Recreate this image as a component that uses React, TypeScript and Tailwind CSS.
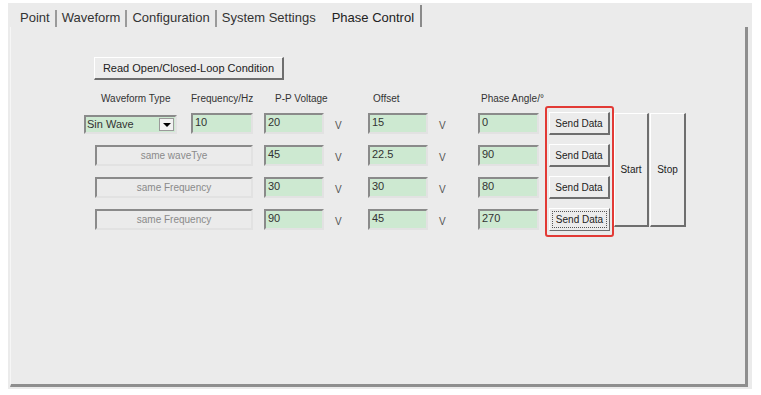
import React from 'react';

const font = { fontFamily: '"Liberation Sans", Arial, sans-serif' };

const raised =
  'border border-t-white border-l-white border-r-[#6e6e6e] border-b-[#6e6e6e] bg-[#ececec]';
const sunken =
  'border-2 border-t-[#8a8a8a] border-l-[#8a8a8a] border-r-[#e2e2e2] border-b-[#e2e2e2]';

const tabs = ['Point', 'Waveform', 'Configuration', 'System Settings'];

const rows = [
  { first: 'select', pp: '20', offset: '15', phase: '0' },
  { first: 'same waveTye', pp: '45', offset: '22.5', phase: '90' },
  { first: 'same Frequency', pp: '30', offset: '30', phase: '80' },
  { first: 'same Frequency', pp: '90', offset: '45', phase: '270' },
];

function Field({ value, w }: { value: string; w: string }) {
  return (
    <div className={`${sunken} ${w} h-[21px] bg-[#cde9d1] text-[11px] text-[#333] pl-[2px] leading-[15px]`}>
      {value}
    </div>
  );
}

function Unit({ w }: { w: string }) {
  return <div className={`${w} pl-[11px] pt-[5px] text-[10px] text-[#555]`}>V</div>;
}

export default function App() {
  return (
    <div className="w-[761px] h-[395px] bg-white pt-[3px] pl-[8px]" style={font}>
      <div className="w-[744px] h-[386px] bg-[#ebebeb] flex flex-col">
        {/* tab strip */}
        <div className="h-[24px] flex items-center pt-[6px] pl-[12px] text-[13px] text-[#333]">
          {tabs.map((t, i) => (
            <React.Fragment key={t}>
              <span className={i === 3 ? 'pr-[16px]' : ''}>{t}</span>
              {i < 3 && <span className="mx-[5px] w-[2px] h-[17px] bg-[#9a9a9a]" />}
            </React.Fragment>
          ))}
          <span className="text-[#222]">Phase Control</span>
          <span className="ml-[6px] w-[2px] h-[22px] self-end bg-[#8a8a8a]" />
        </div>

        {/* panel */}
        <div className="ml-[2px] w-[738px] h-[360px] border-l border-l-[#f6f6f6] border-r-[3px] border-r-[#8e8e8e] border-b-[3px] border-b-[#8e8e8e] flex flex-col">
          <button
            className={`${raised} ml-[83px] mt-[30px] w-[190px] h-[23px] text-[11px] text-[#222] border-r-2 border-b-2`}
          >
            Read Open/Closed-Loop Condition
          </button>

          <div className="flex mt-[11px] h-[14px] text-[10px] text-[#333]">
            <span className="ml-[90px] w-[90px]">Waveform Type</span>
            <span className="w-[84px]">Frequency/Hz</span>
            <span className="w-[98px]">P-P Voltage</span>
            <span className="w-[108px]">Offset</span>
            <span>Phase Angle/°</span>
          </div>

          <div className="flex items-start mt-[1px]">
            <div className="ml-[73px] pt-[7px] flex flex-col gap-[11px]">
              {rows.map((r, i) => (
                <div key={i} className="flex h-[21px]">
                  {r.first === 'select' ? (
                    <>
                      <div className={`${sunken} w-[93px] h-[19px] mt-[2px] bg-[#cde9d1] flex items-center justify-between text-[11px] text-[#333] pl-[1px] pr-[1px]`}>
                        <span>Sin Wave</span>
                        <span className="w-[15px] h-[13px] bg-[#f2f2f2] border border-[#9a9a9a] flex items-center justify-center">
                          <span className="w-0 h-0 border-l-[4px] border-r-[4px] border-t-[4px] border-l-transparent border-r-transparent border-t-black" />
                        </span>
                      </div>
                      <div className="ml-[14px]">
                        <Field value="10" w="w-[62px]" />
                      </div>
                    </>
                  ) : (
                    <div className={`${sunken} ml-[11px] w-[158px] h-[21px] text-[10px] text-[#8a8a8a] flex items-center justify-center`}>
                      {r.first}
                    </div>
                  )}
                  <div className="ml-[11px] flex">
                    <Field value={r.pp} w="w-[60px]" />
                    <Unit w="w-[44px]" />
                    <Field value={r.offset} w="w-[60px]" />
                    <Unit w="w-[50px]" />
                    <Field value={r.phase} w="w-[61px]" />
                  </div>
                </div>
              ))}
            </div>

            <div className="ml-[6px] w-[69px] h-[131px] border-2 border-[#e23a35] rounded-[3px] flex flex-col items-center pt-[4px] gap-[9px]">
              {[0, 1, 2, 3].map((i) => (
                <button
                  key={i}
                  className={`${raised} w-[61px] h-[23px] text-[10px] text-[#222] ${
                    i === 3 ? 'border-[#444] border-t-[#444] border-l-[#444] outline-1 outline-dotted outline-offset-[-4px] outline-[#555]' : 'border-b-2 border-r-2'
                  }`}
                >
                  Send Data
                </button>
              ))}
            </div>

            <button className={`${raised} mt-[7px] w-[35px] h-[114px] text-[10px] text-[#222] border-r-2 border-b-2 border-t-[#ececec]`}>
              Start
            </button>
            <button className={`${raised} ml-[1px] mt-[7px] w-[36px] h-[114px] text-[10px] text-[#222] border-r-2 border-b-2 border-t-[#ececec]`}>
              Stop
            </button>
          </div>
        </div>
      </div>
    </div>
  );
}
